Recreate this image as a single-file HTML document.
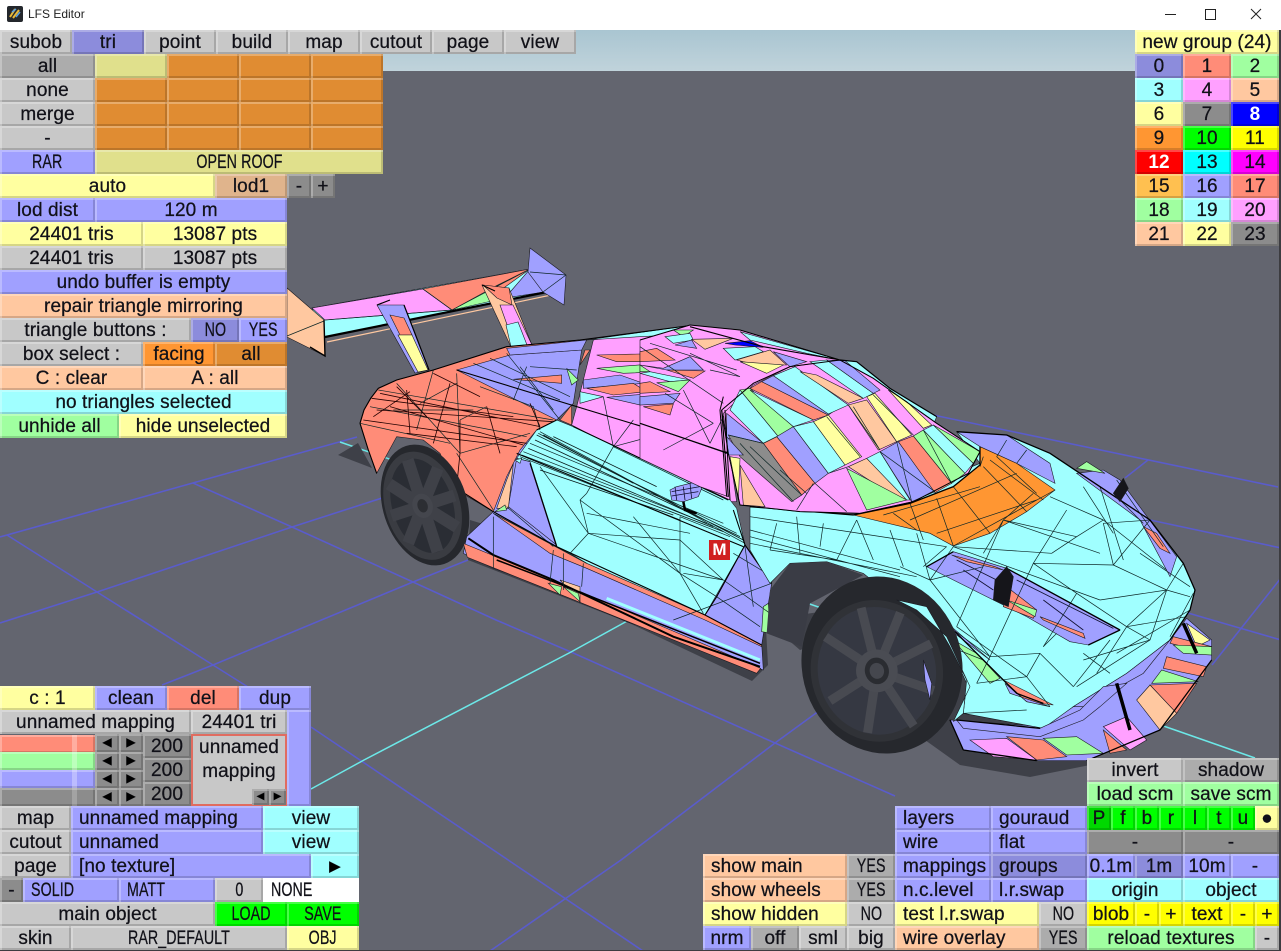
<!DOCTYPE html>
<html><head><meta charset="utf-8"><title>LFS Editor</title>
<style>
html,body{margin:0;padding:0;width:1281px;height:951px;overflow:hidden;background:#63656f}
#t{position:absolute;left:0;top:0;width:1281px;height:30px;background:#fff}
#t span{position:absolute;left:28px;top:7px;font:12px "Liberation Sans",sans-serif;color:#222}
#sky{position:absolute;left:0;top:30px;width:1281px;height:41px;background:linear-gradient(#a9c5d1,#c0d3db)}
svg{position:absolute;left:0;top:0}
#car *{vector-effect:non-scaling-stroke}
#car polygon{stroke:#1a1a22;stroke-width:.6}
#car path.w{fill:none;stroke:#0d2626;stroke-width:.7}
#car path.k{fill:none;stroke:#000;stroke-width:1.4}
.p{fill:#ffa0ff}.s{fill:#ff8c78}.b{fill:#a0a0ff}.c{fill:#a0ffff}.g{fill:#a0ffa0}.y{fill:#ffffa0}.h{fill:#ffc8a0}.o{fill:#ff9632}.x{fill:#8c8c8c}.u{fill:#0000ff}.n{fill:#23252c}
.d{position:absolute;height:24px;line-height:25px;text-align:center;box-sizing:border-box;font-family:"Liberation Sans",sans-serif;font-size:19px;letter-spacing:.1px;color:#111118;-webkit-text-stroke:.25px #111118;white-space:pre;overflow:hidden;box-shadow:inset 2px 2px 0 rgba(255,255,255,.28),inset -2px -2px 0 rgba(0,0,0,.16)}
.l{text-align:left;padding-left:8px}
.q{display:inline-block;transform:scaleX(.75)}
.l .q{transform-origin:0 50%}
.G{background:#c8c8c8}.GP{background:#acacac}.GD{background:#8c8c8c}
.V{background:#a0a0ff}.VP{background:#8c8cdc}.Y{background:#ffffa0}.H{background:#ffc8a0}.C{background:#a0ffff}.N{background:#a0ffa0}
.S{background:#ff8c78}.O{background:#ff9632}.OP{background:#e08c32}.K{background:#e0e08c}.T{background:#e0b48c}
.F{background:#00ff00}.FP{background:#00d800}.YY{background:#ffff00}.W{background:#fff}.BL{background:#0000ff;color:#fff;-webkit-text-stroke:0;font-weight:bold}.RD{background:#ff0000;color:#fff;-webkit-text-stroke:0;font-weight:bold}
.CY{background:#00ffff}.MG{background:#ff00ff}.AM{background:#ffc050}
.sm{font-size:12px;line-height:17px;height:18px;width:24px;color:#000}
</style></head><body>
<div id="sky"></div>
<svg id="car" width="1281" height="951" viewBox="0 0 1281 951">
<!-- grid -->
<g fill="none" stroke="#5a5ccb" stroke-width="1.6">
<path d="M0 537L357 437M7 535L97 592L213 665L248 687M311 727L643 951M193 483L292 527L413 582L496 620L571 652L775 743L895 796M0 623L97 592L292 527L382 498M162 685L213 665L413 582L468 560M490 951L621 860L775 743L823 708"/>
<path d="M933 415L1000 429L1278 487M1148 460L1125 478M1150 520L1281 548M1188 613L1281 640M1212 665L1281 578"/>
</g>
<path d="M340 442L1175 730L1255 758M311 789L364 760L571 652L629 620" fill="none" stroke="#6ce8e8" stroke-width="1.5"/>
<!-- shadows -->
<polygon points="338,455 358,443 372,468" style="fill:#3e4048;stroke:none"/>
<polygon points="468,560 627,622 752,681 768,665 765,610 470,520" style="fill:#3e4048;stroke:none"/>
<polygon points="765,620 800,650 830,640 925,740 960,765 1030,777 1090,765 1110,730 900,600" style="fill:#3e4048;stroke:none"/>
<!-- wing -->
<polygon class="c" points="312,308 325,337 557,290 530,269"/>
<polygon class="p" points="312,308 423,289 452,310 325,320"/>
<polygon class="s" points="423,289 530,269 494,295 452,310"/>
<polygon class="g" points="452,310 494,287 505,298"/>
<polygon class="b" points="505,298 530,269 557,290"/>
<path d="M325 337L557 290" fill="none" stroke="#000" stroke-width="2.2"/>
<path d="M327 342L556 294" fill="none" stroke="#ffc8a0" stroke-width="1.2"/>
<path class="w" d="M423 289L452 310M325 320L452 310M452 310L530 269M494 287L530 269"/>
<polygon class="b" points="530,248 566,275 564,305 543,292 528,272"/>
<path class="w" d="M530 272L566 275M543 292L566 275"/>
<polygon class="h" points="287,288 324,320 325,356 287,337"/>
<path class="w" d="M287 336L324 321"/>
<path class="k" d="M324 320L325 356L310 347"/>
<!-- struts -->
<polygon class="b" points="377,305 404,305 429,370 415,373"/>
<polygon class="s" points="390,315 404,318 412,335 400,335"/>
<polygon class="y" points="398,335 412,335 428,370 418,372"/>
<polygon class="h" points="482,285 509,288 532,345 511,347"/>
<polygon class="s" points="483,285 509,288 512,305 497,298"/>
<polygon class="p" points="500,305 513,305 532,345 515,347"/>
<polygon class="c" points="506,325 518,322 527,345 511,347"/>
<path d="M404 305L429 370M377 305L390 300M482 285L495 291" fill="none" stroke="#000" stroke-width="1.2"/>
<!-- rear/side: zoom6 coords -->
<g transform="translate(340 320) scale(.33333)">
<polygon class="b" points="350,505 460,575 640,680 1095,885 1265,975 1295,790 1215,675 1000,560 700,320 600,320 300,330"/>
<polygon class="b" points="380,650 370,700 460,745 640,810 860,905 1100,990 1270,1050 1265,970 1095,885 640,680 460,575"/>
<polygon class="s" points="370,670 382,712 640,815 1250,1060 1262,1045 640,780"/>
<polygon class="s" points="460,580 650,680 1095,880 1265,970 1265,980 1095,900 740,745 630,700"/>
<polygon class="g" points="625,790 665,800 660,825"/>
<polygon class="h" points="660,780 720,800 720,845"/>
<polygon class="g" points="670,800 715,820 720,845"/>
<path d="M800 835L1260 1020" fill="none" stroke="#a0ffff" stroke-width="3"/>
<path d="M385 655L460 705L640 780L1000 950L1260 1040" fill="none" stroke="#000" stroke-width="2"/>
<path d="M470 720L640 785L1260 1030" fill="none" stroke="#000" stroke-width="1.5"/>
<polygon class="s" points="60,310 72,270 92,235 115,205 170,180 280,150 500,80 720,60 695,250 650,300 590,330 540,390 500,470 460,575 350,510 300,400 250,360 170,350 110,460 85,390"/>
<polygon class="b" points="350,150 510,105 725,90 700,250 650,300"/>
<polygon class="s" points="520,178 665,165 665,190"/>
<polygon class="g" points="680,145 715,180 695,195"/>
<polygon class="s" points="720,135 750,90 735,90"/>
<polygon class="s" points="660,300 695,255 695,315"/>
<polygon class="p" points="695,315 710,260 760,60 1040,18 1350,100 1160,340 1190,545 1165,545 820,380"/>
<polygon class="c" points="740,60 1040,18 1100,40 900,50"/>
<polygon class="b" points="500,85 740,60 725,90 510,105"/>
<polygon class="s" points="770,105 990,100 1010,125 830,125"/>
<polygon class="g" points="770,145 960,130 970,155 850,160"/>
<polygon class="c" points="940,155 1050,185 970,190"/>
<polygon class="b" points="730,180 840,165 910,190 730,205"/>
<polygon class="s" points="740,205 880,190 920,215 820,225"/>
<polygon class="g" points="970,190 1050,185 1020,215"/>
<polygon class="c" points="720,215 790,230 720,250"/>
<polygon class="b" points="800,232 1000,215 900,255"/>
<polygon class="s" points="900,260 1000,250 990,285"/>
<polygon class="c" points="590,330 650,300 700,320 1170,540 1190,565 1215,675 1130,830 1095,885 740,730 650,680 570,425 530,415"/>
<polygon class="b" points="530,415 570,425 650,675 505,560"/>
<polygon class="h" points="500,480 520,430 505,565 470,565"/>
<polygon class="g" points="465,575 495,555 500,570"/>
<polygon class="c" points="525,420 545,415 540,430"/>
<polygon class="b" points="1215,675 1295,790 1265,975 1095,885"/>
<polygon class="g" points="1270,860 1285,850 1290,940 1265,935"/>
<path class="w" d="M115 210L640 300M90 260L560 350M170 190L360 400M280 150L230 330M350 160L360 400M360 400L570 340M350 400L460 570M360 300L440 260M160 270L400 270M60 310L330 370M240 250L350 190M420 200L580 260L600 330M500 100L660 300M560 140L520 240M400 130L660 240M450 115L690 230M540 140L640 270M570 140L710 150M460 580L740 730M500 560L640 680M460 590L460 745M640 690L630 790M670 700L670 810M730 730L725 800M1000 900L1295 790M1150 780L1290 880M1180 700L1280 760M1130 830L1260 920M1215 680L1240 860"/>
<path d="M70 300L560 370M110 270L640 305M120 220L600 320M150 260L550 375M95 235L520 290M360 300L360 400L350 500M200 210L210 340M330 190L280 370M440 260L480 400M570 250L600 320M200 340L530 380M170 200L260 290M280 160L420 230M210 215L100 290" fill="none" stroke="#200" stroke-width=".8"/>
<path class="w" d="M600 440L745 640M745 640L720 540M1020 590L1020 760M1020 760L1090 880M720 540L1020 760M745 640L690 700M745 640L1150 780M820 380L740 520M740 520L720 540M1020 590L1170 650M600 335L1215 670M590 345L1190 640M570 370L1150 610M550 395L1100 610M540 410L1020 600M1020 660L1150 780M1030 760L1150 780M740 580L1050 640M820 380L1150 540M970 340L1050 470M970 340L820 380M880 300L820 380M790 230L820 380M1050 470L1130 410M1130 410L1160 400"/>
<path d="M595 340L1210 660M585 360L1200 650M565 385L1120 620M545 405L1150 635M600 450L1000 585M610 345L880 490M640 350L950 500" fill="none" stroke="#0a1a1a" stroke-width=".8"/>
<path class="w" d="M745 640L1020 660M880 590L1020 760M1130 830L1020 760M690 700L740 730M650 680L690 700"/>
<path d="M350 150L1170 400M530 400L1210 680M570 430L650 680M350 505L460 575L650 680L1095 885L1265 975M1215 675L1130 830L1095 885M1180 570L1215 675L1295 790M590 330L650 300M700 320L1165 540M60 310L72 270L92 235L115 205L170 180L280 150L500 80L720 60L1040 18M60 310L85 390L110 460" fill="none" stroke="#000" stroke-width="1.1"/>
<!-- mirror -->
<polygon class="b" points="990,510 1010,500 1070,485 1085,505 1075,530 1030,545 995,540"/>
<path d="M995 515L1080 500M1005 500L1010 540M1030 500L1035 540M1050 490L1055 535M995 528L1075 515" fill="none" stroke="#101030" stroke-width=".8"/>
<path d="M1030 545L1035 570L1070 580" fill="none" stroke="#000" stroke-width="2.5"/>
</g>
<!-- rear wheel -->
<g transform="translate(425 505) rotate(-18) scale(.42 .62)">
<ellipse rx="100" ry="100" fill="#26282d"/><ellipse cx="-6" rx="80" ry="84" fill="#2a2d34" stroke="#3a3c42" stroke-width="7"/>
<g stroke="#3f4148" stroke-width="12"><path d="M-6 0L-6 -78M-6 0L56 -50M-6 0L74 0M-6 0L56 50M-6 0L-6 78M-6 0L-66 50M-6 0L-84 0M-6 0L-66 -50"/></g>
<ellipse cx="-6" rx="24" ry="20" fill="#44464d"/><ellipse cx="-6" rx="12" ry="11" fill="#2c2e33"/>
</g>
<path d="M374 445L392 432L397 447L385 470" fill="none" stroke="#000" stroke-width="1.2" style="display:none"/>
<!-- front: zoom7 coords -->
<g transform="translate(750 420) scale(.33333)">
<polygon class="b" points="600,900 640,990 860,1022 1010,1022 1230,930 1385,720 1385,660 1310,595 1260,660 970,860 880,920"/>
<polygon class="g" points="1205,790 1235,750 1345,785"/>
<polygon class="s" points="1250,710 1370,740 1360,770 1240,745"/>
<polygon class="s" points="1200,795 1340,790 1280,880"/>
<polygon class="h" points="1160,840 1200,795 1280,880 1230,930"/>
<polygon class="p" points="1060,920 1130,890 1190,960 1140,990"/>
<polygon class="s" points="770,950 880,960 950,1010 860,1020"/>
<polygon class="g" points="880,955 980,950 1060,1000 950,1005"/>
<polygon class="p" points="660,960 770,955 860,1020 730,1010"/>
<polygon class="s" points="1060,930 1130,990 1080,1000"/>
<polygon class="y" points="1310,610 1380,660 1340,680"/>
<polygon class="s" points="1270,650 1385,680 1385,700 1260,670"/>
<polygon class="g" points="1270,675 1385,680 1385,705 1300,700"/>
<polygon class="c" points="0,260 310,285 690,130 620,35 770,45 900,100 1050,200 1200,300 1300,430 1335,510 1320,570 1260,660 1130,760 970,860 880,925 640,880 650,790 600,680 530,590 440,540 340,460 230,425 120,430 60,490 0,390"/>
<polygon class="b" points="620,35 770,45 900,130 915,190 800,130 690,80"/>
<polygon class="o" points="310,285 480,250 610,200 690,135 690,80 800,130 915,210 830,275 720,340 610,378 540,340"/>
<polygon class="b" points="980,160 1060,150 1110,180 1280,410 1260,470 1170,300"/>
<polygon class="g" points="980,145 1010,125 1065,160"/>
<polygon class="s" points="1180,320 1220,340 1260,400 1230,385"/>
<polygon class="b" points="530,440 610,395 770,445 1110,630 1015,675 960,665 830,590"/>
<polygon class="s" points="605,405 735,440 760,450 650,425"/>
<polygon class="s" points="770,500 860,570 850,595 760,560"/>
<polygon class="g" points="770,540 860,570 855,590"/>
<polygon class="s" points="870,590 1000,640 1005,655 880,600"/>
<path d="M620 420L740 480M640 450L730 510M800 480L1090 625M880 540L1000 630" fill="none" stroke="#101030" stroke-width=".8"/>
<polygon class="b" points="520,520 610,625 720,720 640,660 560,600"/>
<polygon class="g" points="610,660 680,700 750,775 720,790"/>
<polygon class="s" points="760,780 910,855 830,845"/>
<polygon class="b" points="765,790 830,845 900,860 780,820"/>
<polygon class="b" points="970,860 1130,760 1260,660 1180,760 1000,860"/>
<polygon class="b" points="620,900 870,925 990,870 1060,800 1130,790 1050,860 1000,900 870,950 640,925"/>
<path class="w" d="M1090 435L850 430M980 350L905 400M1090 435L1250 510M1090 435L1060 310M1250 510L1200 660M1250 510L1320 530M850 430L980 520M980 520L1130 620M980 520L880 680M720 710L870 700M870 700L970 800M870 700L830 770M720 710L680 790M720 710L610 630M760 300L1050 400M900 230L1060 300M1060 300L1250 450M610 380L1050 540M980 350L760 300M1060 300L980 350M905 400L610 380M1130 620L1200 660M1130 620L1040 760M1250 510L1130 620M980 800L1200 660M680 790L830 770M830 770L900 860M640 880L830 870M0 370L500 470M0 290L590 380M80 310L60 390M140 290L150 400M220 310L210 380M320 300L370 420M420 330L460 440M500 340L540 480M540 480L610 380M540 480L720 710M0 330L450 450M0 350L450 470M60 390L260 420M260 420L320 300M450 440L540 480M590 380L520 440M620 620L760 300M720 710L850 430"/>
<path class="w" d="M1050 200L1120 420M1200 300L1090 435M1300 430L1250 510M1330 520L1260 650M1320 570L1100 700M1200 660L1000 720M760 300L700 400M850 220L760 300M950 270L850 430M1170 400L1320 500M1130 620L1310 590M1000 700L1080 760M920 640L880 680M1080 660L970 800M1050 540L1250 510M700 440L540 480M620 620L830 770M600 680L700 720M1060 310L1200 300"/>
<path class="w" d="M430 280L500 330M480 250L520 360M560 235L610 378M610 200L720 340M700 140L830 275M720 120L880 240M740 110L860 220M400 285L690 200M480 300L800 160M560 340L860 240M610 378L915 210M700 110L690 140M770 60L740 110M830 90L800 130M1000 200L1090 340M1100 180L1240 380M1110 240L1180 310"/>
<path d="M0 260L310 285M310 285L480 250L610 200L690 135L690 80M620 35L770 45L900 100L1050 200L1200 300L1300 430L1335 510L1320 570L1260 660M520 520L610 630L700 720L800 820L880 850M530 440L610 395M770 445L1110 630M1015 675L1110 630M1385 720L1230 930L1010 1022M640 990L860 1022M600 900L640 990M620 900L870 925" fill="none" stroke="#000" stroke-width="1.3"/>
<path d="M1100 790L1140 930M1300 610L1340 700" fill="none" stroke="#000" stroke-width="3.5"/>
<polygon points="735,480 770,440 790,470 775,560 730,540" style="fill:#15151a"/>
<polygon points="1090,220 1120,175 1135,205 1110,245" style="fill:#15151a"/>
<!-- arch -->
<polygon class="n" points="60,510 50,640 155,680 180,550 340,465 230,425 120,430" style="fill:#3a3c45;stroke:none"/>
</g>
<!-- front wheel -->
<g transform="translate(882 665) rotate(-14) scale(.8 .89)">
<ellipse rx="100" ry="100" fill="#26282d"/>
<ellipse cx="-8" cy="5" rx="78" ry="76" fill="#353842" stroke="#303237" stroke-width="7"/>
<g stroke="#484a51" stroke-width="9"><path d="M-8 5L-8 -68M-8 5L38 -52M-8 5L66 -10M-8 5L55 42M-8 5L20 75M-8 5L-38 70M-8 5L-74 25M-8 5L-60 -46"/></g>
<ellipse cx="-8" cy="5" rx="26" ry="24" fill="#4a4c53"/><ellipse cx="-8" cy="5" rx="15" ry="15" fill="#2a2c31"/><ellipse cx="-8" cy="5" rx="9" ry="9" fill="#45474e"/>
</g>
<g transform="translate(750 420) scale(.33333)">
<polygon class="c" points="440,540 530,560 600,680 650,780 640,880 610,905 660,800 590,650 500,570"/>
<polygon class="b" points="520,720 545,790 540,840 525,780"/>
</g>
<!-- roof: zoom10 coords -->
<g transform="translate(640 310) scale(.33333)">
<polygon class="p" points="0,90 150,45 300,60 600,150 450,170 340,220 245,300 265,560 180,530 0,445"/>
<polygon class="s" points="0,125 50,115 105,150 0,155"/>
<polygon class="b" points="0,165 70,175 150,140 190,180 80,180"/>
<polygon class="g" points="0,165 30,185 0,185"/>
<polygon class="s" points="80,180 195,183 160,205"/>
<polygon class="c" points="0,190 30,185 150,210 90,215"/>
<polygon class="g" points="50,218 150,210 115,245"/>
<polygon class="s" points="0,220 30,215 90,245 0,250"/>
<polygon class="b" points="0,260 120,250 100,280 0,285"/>
<polygon class="s" points="10,290 100,282 90,315"/>
<polygon class="g" points="100,60 160,60 130,80"/>
<polygon class="c" points="75,80 150,70 160,90 100,100"/>
<polygon class="h" points="155,88 280,85 195,118"/>
<polygon class="b" points="105,105 155,90 170,115"/>
<polygon class="u" points="255,100 330,92 370,112 285,105"/>
<polygon class="c" points="250,115 345,110 370,125 285,150"/>
<polygon class="h" points="290,150 390,120 440,165 350,165"/>
<polygon class="y" points="300,155 430,165 380,190"/>
<polygon class="b" points="400,125 500,155 450,170"/>
<polygon class="c" points="300,65 600,150 500,130 330,90"/>
<polygon class="c" points="600,150 650,155 750,235 890,320 880,345 745,240"/>
<path class="w" d="M0 340L260 430M75 250L220 340M220 340L70 420M130 240L210 400M210 400L260 300M210 180L300 200M150 130L300 200M30 100L290 180M0 110L250 280"/>
<path d="M0 90L150 45L300 60L600 150M150 50L370 110L600 150M0 340L265 430M245 300L265 560" fill="none" stroke="#000" stroke-width="1.1"/>
<polygon class="p" points="250,310 340,225 450,170 600,150 700,205 890,340 1020,425 985,490 820,575 660,610 480,605 300,585 265,430"/>
<polygon class="s" points="330,235 365,215 565,315 520,330"/>
<polygon class="b" points="365,215 400,197 600,290 565,315"/>
<polygon class="c" points="400,197 465,170 625,285 565,312"/>
<polygon class="h" points="480,185 530,195 670,265 625,280"/>
<polygon class="c" points="510,155 560,150 700,250 670,265"/>
<polygon class="b" points="560,150 615,152 720,240 700,250"/>
<polygon class="g" points="300,240 330,235 460,350 415,380"/>
<polygon class="c" points="270,300 300,240 415,380 370,400"/>
<polygon class="b" points="260,310 370,400 260,385"/>
<polygon class="c" points="330,240 520,330 460,350"/>
<polygon class="y" points="520,335 565,315 665,440 615,465"/>
<polygon class="h" points="625,285 680,270 770,395 715,420"/>
<polygon class="y" points="680,260 705,250 815,375 770,395"/>
<polygon class="y" points="745,240 800,275 875,345 850,355"/>
<polygon class="b" points="410,380 460,350 565,490 525,520"/>
<polygon class="c" points="460,350 520,335 615,465 565,490"/>
<polygon class="s" points="370,400 410,380 525,520 485,555"/>
<polygon class="x" points="265,375 370,400 485,555 455,575 300,440"/>
<polygon class="b" points="260,380 310,435 265,435"/>
<polygon class="h" points="625,470 680,445 800,565 780,570"/>
<polygon class="c" points="680,445 720,425 810,570 800,570"/>
<polygon class="b" points="720,425 775,395 885,545 815,575"/>
<polygon class="s" points="775,395 820,378 935,520 885,548"/>
<polygon class="g" points="820,378 850,360 975,490 935,520"/>
<polygon class="c" points="850,360 880,345 1000,460 975,490"/>
<polygon class="g" points="880,345 1020,425 1000,460"/>
<polygon class="g" points="620,475 800,570 680,600"/>
<polygon class="h" points="300,465 375,590 310,585"/>
<polygon class="y" points="270,440 300,445 295,570"/>
<path class="w" d="M265 375L370 400M300 400L460 575M330 410L485 555M420 480L500 550M560 320L660 440M640 290L720 420M700 255L820 375M625 285L720 420M520 520L470 600M525 520L620 605M565 490L625 470M410 380L370 400M770 395L815 575M720 425L885 545M850 360L935 520"/>
<path d="M245 300L340 220L450 170L600 150L700 205L890 340L1020 425L985 490L820 575L660 610L480 605L300 585L265 430L245 300M255 300L270 570M250 260L240 300L260 560" fill="none" stroke="#000" stroke-width="1"/>
<path d="M600 150L650 155L750 235L890 320" fill="none" stroke="#000" stroke-width="1.2"/>
</g>
</svg>
<div class="d" style="left:709px;top:540px;width:21px;height:20px;line-height:20px;background:#d02020;color:#fff;-webkit-text-stroke:0;font-weight:bold;font-size:17px;box-shadow:none;letter-spacing:0">M</div>
<!-- title -->
<div id="t">
<svg width="1281" height="30" viewBox="0 0 1281 30"><rect x="7" y="6" width="16" height="16" rx="2" fill="#24272c"/><path d="M10 17L15 9M13 18L19 10" stroke="#e8b838" stroke-width="2"/><path d="M12 12L16 9M16 17L20 12" stroke="#5aa0e0" stroke-width="1.500"/><path d="M1165 14.500H1176" stroke="#222" fill="none"/><rect x="1205.500" y="9.500" width="10" height="10" fill="none" stroke="#222"/><path d="M1251 9L1261 19M1261 9L1251 19" stroke="#222" fill="none"/></svg>
<span>LFS Editor</span></div>
<!-- top menu -->
<div class="d G" style="left:0;top:30px;width:72px">subob</div>
<div class="d VP" style="left:72px;top:30px;width:72px">tri</div>
<div class="d G" style="left:144px;top:30px;width:72px">point</div>
<div class="d G" style="left:216px;top:30px;width:72px">build</div>
<div class="d G" style="left:288px;top:30px;width:72px">map</div>
<div class="d G" style="left:360px;top:30px;width:72px">cutout</div>
<div class="d G" style="left:432px;top:30px;width:72px">page</div>
<div class="d G" style="left:504px;top:30px;width:72px">view</div>
<!-- swatches -->
<div class="d GP" style="left:0;top:54px;width:95px">all</div>
<div class="d G" style="left:0;top:78px;width:95px">none</div>
<div class="d G" style="left:0;top:102px;width:95px">merge</div>
<div class="d G" style="left:0;top:126px;width:95px">-</div>
<div class="d K" style="left:95px;top:54px;width:72px"></div><div class="d OP" style="left:167px;top:54px;width:72px"></div><div class="d OP" style="left:239px;top:54px;width:72px"></div><div class="d OP" style="left:311px;top:54px;width:72px"></div>
<div class="d OP" style="left:95px;top:78px;width:72px"></div><div class="d OP" style="left:167px;top:78px;width:72px"></div><div class="d OP" style="left:239px;top:78px;width:72px"></div><div class="d OP" style="left:311px;top:78px;width:72px"></div>
<div class="d OP" style="left:95px;top:102px;width:72px"></div><div class="d OP" style="left:167px;top:102px;width:72px"></div><div class="d OP" style="left:239px;top:102px;width:72px"></div><div class="d OP" style="left:311px;top:102px;width:72px"></div>
<div class="d OP" style="left:95px;top:126px;width:72px"></div><div class="d OP" style="left:167px;top:126px;width:72px"></div><div class="d OP" style="left:239px;top:126px;width:72px"></div><div class="d OP" style="left:311px;top:126px;width:72px"></div>
<div class="d V" style="left:0;top:150px;width:95px"><span class="q">RAR</span></div>
<div class="d K" style="left:95px;top:150px;width:288px"><span class="q">OPEN ROOF</span></div>
<div class="d Y" style="left:0;top:174px;width:215px">auto</div>
<div class="d T" style="left:215px;top:174px;width:72px">lod1</div>
<div class="d GD" style="left:287px;top:174px;width:24px">-</div>
<div class="d GD" style="left:311px;top:174px;width:24px">+</div>
<div class="d V" style="left:0;top:198px;width:95px">lod dist</div>
<div class="d V" style="left:95px;top:198px;width:192px">120 m</div>
<div class="d Y" style="left:0;top:222px;width:143px">24401 tris</div>
<div class="d Y" style="left:143px;top:222px;width:144px">13087 pts</div>
<div class="d G" style="left:0;top:246px;width:143px">24401 tris</div>
<div class="d G" style="left:143px;top:246px;width:144px">13087 pts</div>
<div class="d V" style="left:0;top:270px;width:287px">undo buffer is empty</div>
<div class="d H" style="left:0;top:294px;width:287px">repair triangle mirroring</div>
<div class="d G" style="left:0;top:318px;width:191px">triangle buttons :</div>
<div class="d VP" style="left:191px;top:318px;width:48px"><span class="q">NO</span></div>
<div class="d V" style="left:239px;top:318px;width:48px"><span class="q">YES</span></div>
<div class="d G" style="left:0;top:342px;width:143px">box select :</div>
<div class="d O" style="left:143px;top:342px;width:72px">facing</div>
<div class="d OP" style="left:215px;top:342px;width:72px">all</div>
<div class="d H" style="left:0;top:366px;width:143px">C : clear</div>
<div class="d H" style="left:143px;top:366px;width:144px">A : all</div>
<div class="d C" style="left:0;top:390px;width:287px">no triangles selected</div>
<div class="d N" style="left:0;top:414px;width:119px">unhide all</div>
<div class="d Y" style="left:119px;top:414px;width:168px">hide unselected</div>
<!-- groups -->
<div class="d Y" style="left:1135px;top:30px;width:144px">new group (24)</div>
<div class="d VP" style="left:1135px;top:54px;width:48px">0</div><div class="d S" style="left:1183px;top:54px;width:48px">1</div><div class="d N" style="left:1231px;top:54px;width:48px">2</div>
<div class="d C" style="left:1135px;top:78px;width:48px">3</div><div class="d" style="left:1183px;top:78px;width:48px;background:#ffa0ff">4</div><div class="d H" style="left:1231px;top:78px;width:48px">5</div>
<div class="d Y" style="left:1135px;top:102px;width:48px">6</div><div class="d GD" style="left:1183px;top:102px;width:48px">7</div><div class="d BL" style="left:1231px;top:102px;width:48px">8</div>
<div class="d O" style="left:1135px;top:126px;width:48px">9</div><div class="d F" style="left:1183px;top:126px;width:48px">10</div><div class="d YY" style="left:1231px;top:126px;width:48px">11</div>
<div class="d RD" style="left:1135px;top:150px;width:48px">12</div><div class="d CY" style="left:1183px;top:150px;width:48px">13</div><div class="d MG" style="left:1231px;top:150px;width:48px">14</div>
<div class="d AM" style="left:1135px;top:174px;width:48px">15</div><div class="d V" style="left:1183px;top:174px;width:48px">16</div><div class="d S" style="left:1231px;top:174px;width:48px">17</div>
<div class="d N" style="left:1135px;top:198px;width:48px">18</div><div class="d C" style="left:1183px;top:198px;width:48px">19</div><div class="d" style="left:1231px;top:198px;width:48px;background:#ffa0ff">20</div>
<div class="d H" style="left:1135px;top:222px;width:48px">21</div><div class="d Y" style="left:1183px;top:222px;width:48px">22</div><div class="d GD" style="left:1231px;top:222px;width:48px">23</div>
<!-- bottom-left -->
<div class="d Y" style="left:0;top:686px;width:95px">c : 1</div>
<div class="d V" style="left:95px;top:686px;width:72px">clean</div>
<div class="d S" style="left:167px;top:686px;width:72px">del</div>
<div class="d V" style="left:239px;top:686px;width:72px">dup</div>
<div class="d G" style="left:0;top:710px;width:191px">unnamed mapping</div>
<div class="d G" style="left:191px;top:710px;width:96px">24401 tri</div>
<div class="d V" style="left:287px;top:710px;width:24px;height:96px"></div>
<div class="d S" style="left:0;top:735px;width:95px;height:18px"></div><div style="position:absolute;left:72px;top:735px;width:5px;height:18px;background:rgba(255,255,255,.3)"></div>
<div class="d N" style="left:0;top:752px;width:95px;height:18px"></div><div style="position:absolute;left:72px;top:752px;width:5px;height:18px;background:rgba(255,255,255,.3)"></div>
<div class="d V" style="left:0;top:770px;width:95px;height:18px"></div><div style="position:absolute;left:72px;top:770px;width:5px;height:18px;background:rgba(255,255,255,.3)"></div>
<div class="d GD" style="left:0;top:788px;width:95px;height:18px"></div><div style="position:absolute;left:72px;top:788px;width:5px;height:18px;background:rgba(255,255,255,.2)"></div>
<div class="d GD sm" style="left:95px;top:734px">◀</div><div class="d GD sm" style="left:119px;top:734px">▶</div>
<div class="d GD sm" style="left:95px;top:752px">◀</div><div class="d GD sm" style="left:119px;top:752px">▶</div>
<div class="d GD sm" style="left:95px;top:770px">◀</div><div class="d GD sm" style="left:119px;top:770px">▶</div>
<div class="d GD sm" style="left:95px;top:788px">◀</div><div class="d GD sm" style="left:119px;top:788px">▶</div>
<div class="d GD" style="left:143px;top:734px;width:48px">200</div>
<div class="d GD" style="left:143px;top:758px;width:48px">200</div>
<div class="d GD" style="left:143px;top:782px;width:48px">200</div>
<div class="d G" style="left:191px;top:734px;width:96px;height:72px;line-height:24px;border:2px solid #e06c60;box-shadow:none">unnamed
mapping</div>
<div class="d GD sm" style="left:252px;top:789px;width:17px;height:16px;line-height:15px;font-size:10px">◀</div><div class="d GD sm" style="left:269px;top:789px;width:17px;height:16px;line-height:15px;font-size:10px">▶</div>
<div class="d G" style="left:0;top:806px;width:71px">map</div>
<div class="d V l" style="left:71px;top:806px;width:192px">unnamed mapping</div>
<div class="d C" style="left:263px;top:806px;width:96px">view</div>
<div class="d G" style="left:0;top:830px;width:71px">cutout</div>
<div class="d V l" style="left:71px;top:830px;width:192px">unnamed</div>
<div class="d C" style="left:263px;top:830px;width:96px">view</div>
<div class="d G" style="left:0;top:854px;width:71px">page</div>
<div class="d V l" style="left:71px;top:854px;width:240px">[no texture]</div>
<div class="d C" style="left:311px;top:854px;width:48px;font-size:15px;color:#000">▶</div>
<div class="d GD" style="left:0;top:878px;width:23px">-</div>
<div class="d V l" style="left:23px;top:878px;width:96px"><span class="q">SOLID</span></div>
<div class="d V l" style="left:119px;top:878px;width:96px"><span class="q">MATT</span></div>
<div class="d G" style="left:215px;top:878px;width:48px"><span class="q">0</span></div>
<div class="d W l" style="left:263px;top:878px;width:96px;box-shadow:none"><span class="q">NONE</span></div>
<div class="d G" style="left:0;top:902px;width:215px">main object</div>
<div class="d F" style="left:215px;top:902px;width:72px"><span class="q">LOAD</span></div>
<div class="d F" style="left:287px;top:902px;width:72px"><span class="q">SAVE</span></div>
<div class="d G" style="left:0;top:926px;width:71px">skin</div>
<div class="d G" style="left:71px;top:926px;width:216px"><span class="q">RAR_DEFAULT</span></div>
<div class="d Y" style="left:287px;top:926px;width:72px"><span class="q">OBJ</span></div>
<!-- bottom-right -->
<div class="d G" style="left:1087px;top:758px;width:96px">invert</div>
<div class="d GP" style="left:1183px;top:758px;width:96px">shadow</div>
<div class="d N" style="left:1087px;top:782px;width:96px">load scm</div>
<div class="d N" style="left:1183px;top:782px;width:96px">save scm</div>
<div class="d V l" style="left:895px;top:806px;width:96px">layers</div>
<div class="d V l" style="left:991px;top:806px;width:96px">gouraud</div>
<div class="d FP" style="left:1087px;top:806px;width:24px">P</div><div class="d F" style="left:1111px;top:806px;width:24px">f</div><div class="d F" style="left:1135px;top:806px;width:24px">b</div><div class="d F" style="left:1159px;top:806px;width:24px">r</div><div class="d F" style="left:1183px;top:806px;width:24px">l</div><div class="d F" style="left:1207px;top:806px;width:24px">t</div><div class="d F" style="left:1231px;top:806px;width:24px">u</div><div class="d Y" style="left:1255px;top:806px;width:24px">●</div>
<div class="d V l" style="left:895px;top:830px;width:96px">wire</div>
<div class="d V l" style="left:991px;top:830px;width:96px">flat</div>
<div class="d GD" style="left:1087px;top:830px;width:96px">-</div>
<div class="d GD" style="left:1183px;top:830px;width:96px">-</div>
<div class="d H l" style="left:703px;top:854px;width:144px">show main</div>
<div class="d GP" style="left:847px;top:854px;width:48px"><span class="q">YES</span></div>
<div class="d V l" style="left:895px;top:854px;width:96px">mappings</div>
<div class="d VP l" style="left:991px;top:854px;width:96px">groups</div>
<div class="d V" style="left:1087px;top:854px;width:48px">0.1m</div>
<div class="d VP" style="left:1135px;top:854px;width:48px">1m</div>
<div class="d V" style="left:1183px;top:854px;width:48px">10m</div>
<div class="d V" style="left:1231px;top:854px;width:48px">-</div>
<div class="d H l" style="left:703px;top:878px;width:144px">show wheels</div>
<div class="d GP" style="left:847px;top:878px;width:48px"><span class="q">YES</span></div>
<div class="d V l" style="left:895px;top:878px;width:96px">n.c.level</div>
<div class="d V l" style="left:991px;top:878px;width:96px">l.r.swap</div>
<div class="d C" style="left:1087px;top:878px;width:96px">origin</div>
<div class="d C" style="left:1183px;top:878px;width:96px">object</div>
<div class="d Y l" style="left:703px;top:902px;width:144px">show hidden</div>
<div class="d G" style="left:847px;top:902px;width:48px"><span class="q">NO</span></div>
<div class="d Y l" style="left:895px;top:902px;width:144px">test l.r.swap</div>
<div class="d G" style="left:1039px;top:902px;width:48px"><span class="q">NO</span></div>
<div class="d YY" style="left:1087px;top:902px;width:48px">blob</div>
<div class="d YY" style="left:1135px;top:902px;width:24px">-</div>
<div class="d YY" style="left:1159px;top:902px;width:24px">+</div>
<div class="d YY" style="left:1183px;top:902px;width:48px">text</div>
<div class="d YY" style="left:1231px;top:902px;width:24px">-</div>
<div class="d YY" style="left:1255px;top:902px;width:24px">+</div>
<div class="d V" style="left:703px;top:926px;width:48px">nrm</div>
<div class="d GP" style="left:751px;top:926px;width:48px">off</div>
<div class="d G" style="left:799px;top:926px;width:48px">sml</div>
<div class="d G" style="left:847px;top:926px;width:48px">big</div>
<div class="d H l" style="left:895px;top:926px;width:144px">wire overlay</div>
<div class="d GP" style="left:1039px;top:926px;width:48px"><span class="q">YES</span></div>
<div class="d N" style="left:1087px;top:926px;width:168px">reload textures</div>
<div class="d G" style="left:1255px;top:926px;width:24px">-</div>
<div style="position:absolute;left:1279px;top:30px;width:2px;height:921px;background:#3c3c40"></div>
<div style="position:absolute;left:0;top:950px;width:1281px;height:1px;background:#3c3c40"></div>
</body></html>
